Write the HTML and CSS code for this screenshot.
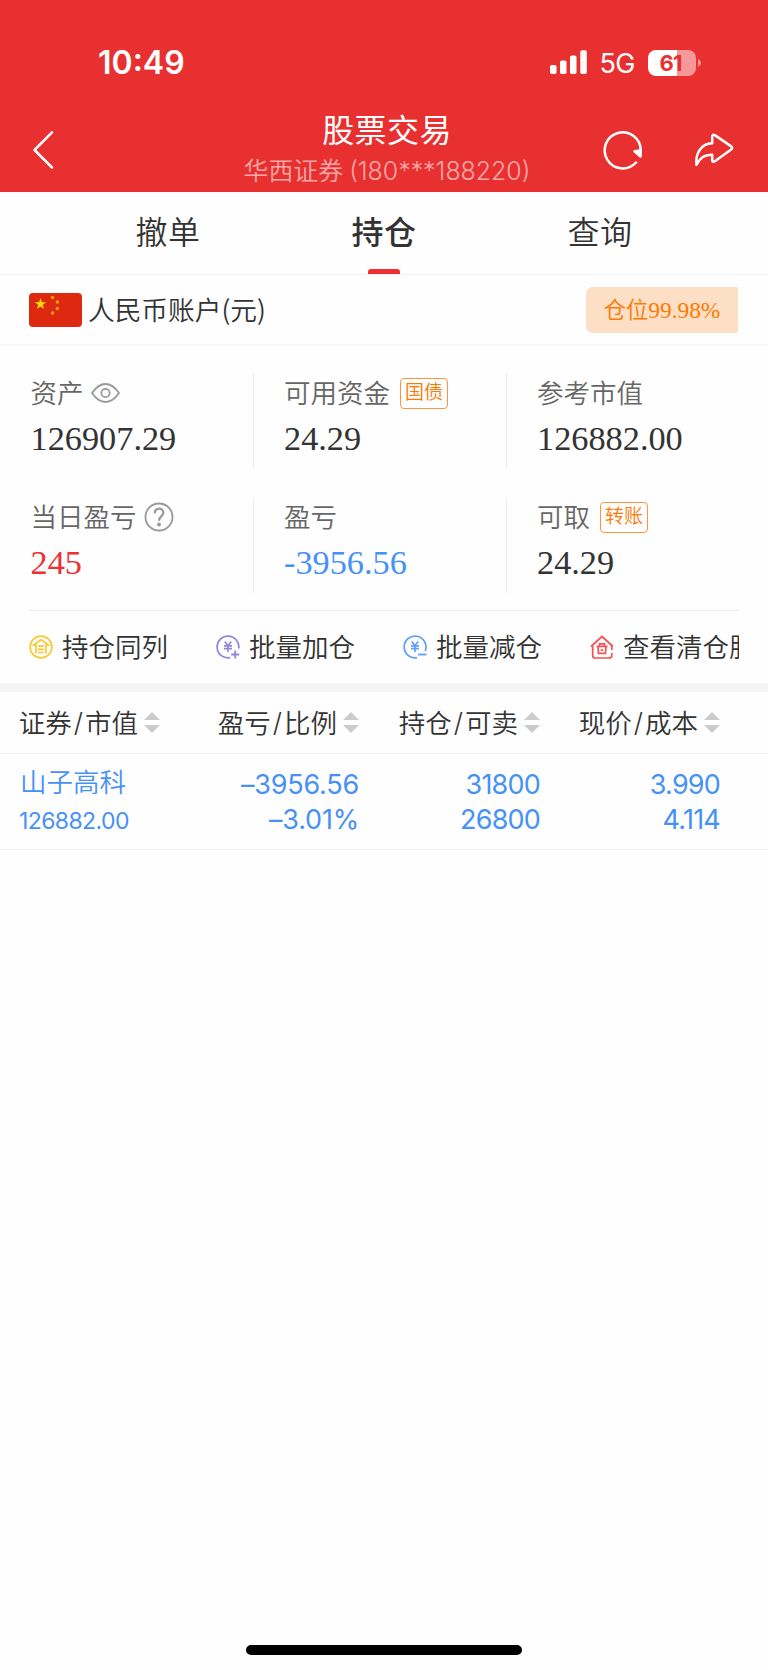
FILE: index.html
```html
<!DOCTYPE html>
<html lang="zh-CN">
<head>
    <meta charset="UTF-8">
    <meta name="viewport" content="width=device-width, initial-scale=1.0">
    <title>股票交易</title>
    <link rel="stylesheet" href="styles.css">
</head>
<body>
    <header>
        <div class="status-bar">
            <span class="time">10:49</span>
            <div class="status-right">
                <svg class="signal" width="37" height="24" viewBox="0 0 37 24" fill="#fff">
                    <rect x="0" y="15" width="6.5" height="9" rx="1.8"/>
                    <rect x="10" y="10.5" width="6.5" height="13.5" rx="1.8"/>
                    <rect x="20" y="5.5" width="6.5" height="18.5" rx="1.8"/>
                    <rect x="30.3" y="0.3" width="6.5" height="23.7" rx="1.8"/>
                </svg>
                <span class="network">5G</span>
                <div class="battery"><span>61</span></div>
                <svg class="battery-tip" width="3" height="8" viewBox="0 0 3 8"><path d="M0 0Q3 1.5 3 4T0 8z" fill="#fff" opacity=".5"/></svg>
            </div>
        </div>
        <div class="title-bar">
            <svg class="back" width="22" height="40" viewBox="0 0 22 40" fill="none" stroke="#fff" stroke-width="2.5" stroke-linecap="round" stroke-linejoin="round">
                <path d="M20 2.3L2.5 20L20 37.5"/>
            </svg>
            <div class="title">
                <h1>股票交易</h1>
                <p>华西证券<span>(180***188220)</span></p>
            </div>
            <div class="header-icons">
                <svg width="40" height="40" viewBox="0 0 40 40" fill="none" stroke="#fff" stroke-width="2.5" stroke-linecap="round" stroke-linejoin="round">
                    <path d="M33 32.5A18 18 0 1 1 37.7 20.5V25"/>
                    <path d="M31.5 21.3L37.5 20.5V26.5z" fill="#fff"/>
                </svg>
                <svg width="40" height="34" viewBox="0 0 40 34" fill="none" stroke="#fff" stroke-width="2.5" stroke-linejoin="round">
                    <path d="M18.2 10.3V4Q18.2 0.6 21.2 2.4L37.2 13.4Q39 15 37.2 16.6L21.2 28Q18.2 30 18.2 27V21.8C10 21.8 6 25 2.4 31.8C1.2 20 7.5 10.6 18.2 10.3z"/>
                </svg>
            </div>
        </div>
    </header>

    <nav>
        <a>撤单</a>
        <a class="active">持仓</a>
        <a>查询</a>
    </nav>

    <main>
        <section class="account">
            <svg class="flag" width="53" height="34" viewBox="0 0 53 34">
                <rect width="53" height="34" rx="4" fill="#de2910"/>
                <path fill="#ffde00" d="M11.5 5l1.4 4.2h4.4l-3.6 2.6 1.4 4.2-3.6-2.6-3.6 2.6 1.4-4.2L5.7 9.2h4.4z"/>
                <g fill="#f9a800">
                    <circle cx="23.5" cy="4.5" r="1.7"/>
                    <circle cx="28.3" cy="9" r="1.7"/>
                    <circle cx="28.3" cy="15.5" r="1.7"/>
                    <circle cx="23.5" cy="20" r="1.7"/>
                </g>
            </svg>
            <span class="account-name">人民币账户(元)</span>
            <span class="position">仓位<b>99.98%</b></span>
        </section>

        <section class="stats">
            <div class="stat">
                <div class="label"><span>资产</span>
                    <svg class="eye" width="29" height="20" viewBox="0 0 29 20" fill="none" stroke="#999" stroke-width="1.8">
                        <path d="M1 10C5.5 3.5 10 1 14.5 1S23.5 3.5 28 10C23.5 16.5 19 19 14.5 19S5.5 16.5 1 10z"/>
                        <circle cx="14.5" cy="10" r="4.2"/>
                    </svg>
                </div>
                <div class="value">126907.29</div>
            </div>
            <div class="stat">
                <div class="label"><span>可用资金</span><em class="tag">国债</em></div>
                <div class="value">24.29</div>
            </div>
            <div class="stat">
                <div class="label"><span>参考市值</span></div>
                <div class="value">126882.00</div>
            </div>
            <div class="stat">
                <div class="label"><span>当日盈亏</span>
                    <svg class="help" width="30" height="30" viewBox="0 0 30 30" fill="none" stroke="#999" stroke-width="1.8">
                        <circle cx="15" cy="15" r="13.5"/>
                        <path d="M10.8 11.2C10.8 5 19.3 5.2 19.3 10.7C19.3 14.2 15 14.2 15 18.8" stroke-width="2.2"/>
                        <circle cx="15" cy="22.5" r="1.9" fill="#999" stroke="none"/>
                    </svg>
                </div>
                <div class="value red">245</div>
            </div>
            <div class="stat">
                <div class="label"><span>盈亏</span></div>
                <div class="value blue">-3956.56</div>
            </div>
            <div class="stat">
                <div class="label"><span>可取</span><em class="tag">转账</em></div>
                <div class="value">24.29</div>
            </div>
        </section>

        <section class="actions">
            <div class="action">
                <svg width="24" height="24" viewBox="0 0 24 24" fill="none" stroke="#fac832" stroke-width="1.7">
                    <circle cx="12" cy="12" r="10.9"/>
                    <path d="M7 18.5V9.8H4.8L12 4.8L19.2 9.8H17V18.5"/>
                    <path d="M9 11.2H15M9 14.3H15M9 17.5H15"/>
                </svg>
                <span>持仓同列</span>
            </div>
            <div class="action">
                <svg width="24" height="24" viewBox="0 0 24 24" fill="none" stroke="#9186dc" stroke-width="1.7">
                    <path d="M14 22.7A10.9 10.9 0 1 1 22.8 13.5"/>
                    <path d="M8.7 6.5L12 10.5L15.3 6.5M8 10.8H16M8 13.7H16M12 10.5V17"/>
                    <path d="M19.2 15.5V23.5M15.2 19.5H23.2" stroke-width="1.8"/>
                </svg>
                <span>批量加仓</span>
            </div>
            <div class="action">
                <svg width="24" height="24" viewBox="0 0 24 24" fill="none" stroke="#5e9ff8" stroke-width="1.7">
                    <path d="M14 22.7A10.9 10.9 0 1 1 22.2 16"/>
                    <path d="M8.7 6.5L12 10.5L15.3 6.5M8 10.8H16M8 13.7H16M12 10.5V17"/>
                    <path d="M15.2 19.5H23.5" stroke-width="1.8"/>
                </svg>
                <span>批量减仓</span>
            </div>
            <div class="action">
                <svg width="24" height="24" viewBox="0 0 24 24" fill="none" stroke="#f25255" stroke-width="1.7">
                    <path d="M1 11.5L12 1.5L23 11.5M2.7 11V20.5Q2.7 23 5 23H19Q21.8 23 21.8 20.5V18M21.8 11V15"/>
                    <path d="M6.5 11.3H17.5M9.5 11V8.8H14.5V11M8 11.5L8.5 18.3H15.5L16 11.5M10.5 15H13.5"/>
                </svg>
                <span>查看清仓股票</span>
            </div>
        </section>

        <section class="holdings">
            <div class="row head">
                <div>证券<span class="slash">/</span>市值<i class="sort"></i></div>
                <div>盈亏<span class="slash">/</span>比例<i class="sort"></i></div>
                <div>持仓<span class="slash">/</span>可卖<i class="sort"></i></div>
                <div>现价<span class="slash">/</span>成本<i class="sort"></i></div>
            </div>
            <div class="row item">
                <div><span class="name">山子高科</span><span class="market">126882.00</span></div>
                <div><span class="profit">–3956.56</span><span class="profit">–3.01%</span></div>
                <div><span>31800</span><span>26800</span></div>
                <div><span>3.990</span><span>4.114</span></div>
            </div>
        </section>
    </main>

    <footer><div class="home-indicator"></div></footer>
</body>
</html>
```
FILE: styles.css
```css
* {
    box-sizing: border-box;
}
body {
    margin: 0;
    width: 768px;
    height: 1670px;
    display: flex;
    flex-direction: column;
    overflow: hidden;
    font-family: Inter, "Noto Sans CJK SC", sans-serif;
    font-weight: 350;
    color: #333;
    background-color: #fefefe;
}
h1, p {
    margin: 0;
    font-weight: inherit;
}
svg {
    display: block;
    flex: none;
}

/* Red header */
header {
    height: 192px;
    background-color: #e93030;
    color: #fff;
}
.status-bar {
    height: 100px;
    padding: 25px 67px 0 98px;
    display: flex;
    justify-content: space-between;
    align-items: center;
}
.time {
    font-size: 32px;
    line-height: 40px;
    font-weight: 600;
}
.status-right {
    display: flex;
    align-items: center;
}
.signal {
    margin-top: -1px;
}
.network {
    margin: 2px 13px 0 12px;
    font-size: 27px;
    font-weight: 400;
    letter-spacing: -0.5px;
}
.battery {
    width: 48px;
    height: 26px;
    border-radius: 8px;
    background: linear-gradient(to right, #fff 61%, #f69798 61%);
    color: #e93030;
    font-size: 22px;
    line-height: 26px;
    font-weight: 700;
    text-align: center;
    letter-spacing: -1px;
}
.battery span {
    margin-right: 3px;
}
.battery-tip {
    margin-left: 2px;
}
.title-bar {
    height: 92px;
    padding: 0 34px 0 32px;
    display: flex;
    justify-content: space-between;
}
.back {
    margin-top: 30px;
}
.title {
    margin-left: 117px;
    text-align: center;
}
.title h1 {
    margin-top: 13px;
    font-size: 32px;
    line-height: 36px;
    font-weight: 400;
    letter-spacing: 0.4px;
}
.title p {
    margin-top: 5px;
    font-size: 24.9px;
    line-height: 34px;
    color: #f7a8a8;
}
.title p span {
    margin-left: 6px;
}
.header-icons {
    padding-top: 30px;
    display: flex;
    align-items: center;
    align-self: flex-start;
    gap: 51px;
}

/* Tabs */
nav {
    height: 83px;
    padding: 0 60px;
    display: flex;
    border-bottom: 1px solid #f2f2f2;
}
nav a {
    flex: 1;
    display: flex;
    flex-direction: column;
    align-items: center;
    justify-content: space-between;
    padding-top: 17px;
    font-size: 32px;
    line-height: 48px;
    letter-spacing: 0.5px;
}
nav .active {
    font-weight: 500;
}
nav .active::after {
    content: "";
    width: 32px;
    height: 5px;
    border-radius: 3px 3px 0 0;
    background-color: #ee2f33;
}

/* Account row */
.account {
    height: 71px;
    padding: 0 30px 0 29px;
    display: flex;
    align-items: center;
    border-bottom: 2px solid #f7f7f7;
}
.account-name {
    margin: -2px 0 0 6px;
    font-family: "Noto Sans CJK SC", sans-serif;
    font-size: 26.7px;
}
.position {
    margin-left: auto;
    width: 152px;
    height: 46px;
    border-radius: 7px 2px 2px 7px;
    background-color: #fddfc5;
    color: #ff7800;
    font-size: 22.3px;
    line-height: 46px;
    text-align: center;
}
.position b {
    font-family: "Liberation Serif", serif;
    font-size: 23.4px;
    font-weight: 400;
}

/* Asset figures */
.stats {
    margin: 0 29px;
    height: 265px;
    padding-top: 28px;
    display: grid;
    grid-template-columns: 225px 253px 1fr;
    grid-auto-rows: 95px;
    row-gap: 29px;
    border-bottom: 1px solid #eee;
}
.stat {
    padding-left: 30px;
    border-right: 1px solid #eee;
}
.stat:nth-child(3n+1) {
    padding-left: 1.5px;
}
.stat:nth-child(3n) {
    border-right: none;
}
.label {
    display: flex;
    align-items: center;
    height: 38px;
    font-size: 26.5px;
    color: #666;
}
.label span {
    margin-top: -3px;
}
.eye, .help {
    margin-left: 7.5px;
}
.tag {
    margin-left: 10px;
    width: 48px;
    height: 31px;
    border: 1px solid #ff9440;
    border-radius: 4px;
    color: #ff7800;
    font-size: 19px;
    font-style: normal;
    line-height: 28px;
    text-align: center;
}
.value {
    margin-top: 6px;
    font-family: "Liberation Serif", serif;
    font-size: 34.3px;
    line-height: 40px;
}
.red {
    color: #ee2f33;
}
.blue {
    color: #4691f8;
}

/* Shortcuts */
.actions {
    height: 72px;
    margin: 0 29px;
    display: flex;
    align-items: center;
    overflow: hidden;
}
.action {
    flex: none;
    width: 187px;
    display: flex;
    align-items: center;
    gap: 9px;
    font-size: 26.5px;
    white-space: nowrap;
}
.action svg {
    margin-top: -1px;
}
.action span {
    margin-top: -4px;
}

/* Holdings table */
.holdings {
    border-top: 9px solid #f4f4f4;
}
.row {
    display: grid;
    grid-template-columns: 140px 199px 181px 180px;
    padding-left: 20px;
    border-bottom: 1px solid #f0f0f0;
}
.head {
    height: 62px;
    padding-bottom: 2px;
    font-size: 26.5px;
}
.head div {
    display: flex;
    align-items: center;
    justify-content: flex-end;
    white-space: nowrap;
}
.slash {
    margin: 0 2px;
}
.sort {
    margin: 2px 0 0 6px;
    display: grid;
    gap: 5px;
}
.sort::before, .sort::after {
    content: "";
    width: 16px;
    height: 8px;
    background-color: #ccc;
}
.sort::before {
    clip-path: polygon(50% 0, 100% 100%, 0 100%);
}
.sort::after {
    clip-path: polygon(0 0, 100% 0, 50% 100%);
}
.item {
    height: 96px;
    padding-top: 14px;
    font-size: 27px;
    line-height: 34.5px;
    font-weight: 400;
    letter-spacing: -0.8px;
    color: #4691f8;
}
.item div {
    display: flex;
    flex-direction: column;
    align-items: flex-end;
}
.item div:first-child {
    align-items: flex-start;
}
.item .profit {
    letter-spacing: -0.2px;
}
.item .name {
    margin-top: -1px;
    font-size: 26.5px;
    line-height: 30px;
    font-weight: 350;
    letter-spacing: 0;
}
.item .market {
    margin: 5px 0 0 -1px;
    font-size: 23px;
    line-height: 38px;
    letter-spacing: -0.6px;
}

footer {
    margin-top: auto;
    height: 25px;
}
.home-indicator {
    width: 276px;
    height: 10px;
    margin: 0 auto;
    border-radius: 5px;
    background-color: #000;
}
```
